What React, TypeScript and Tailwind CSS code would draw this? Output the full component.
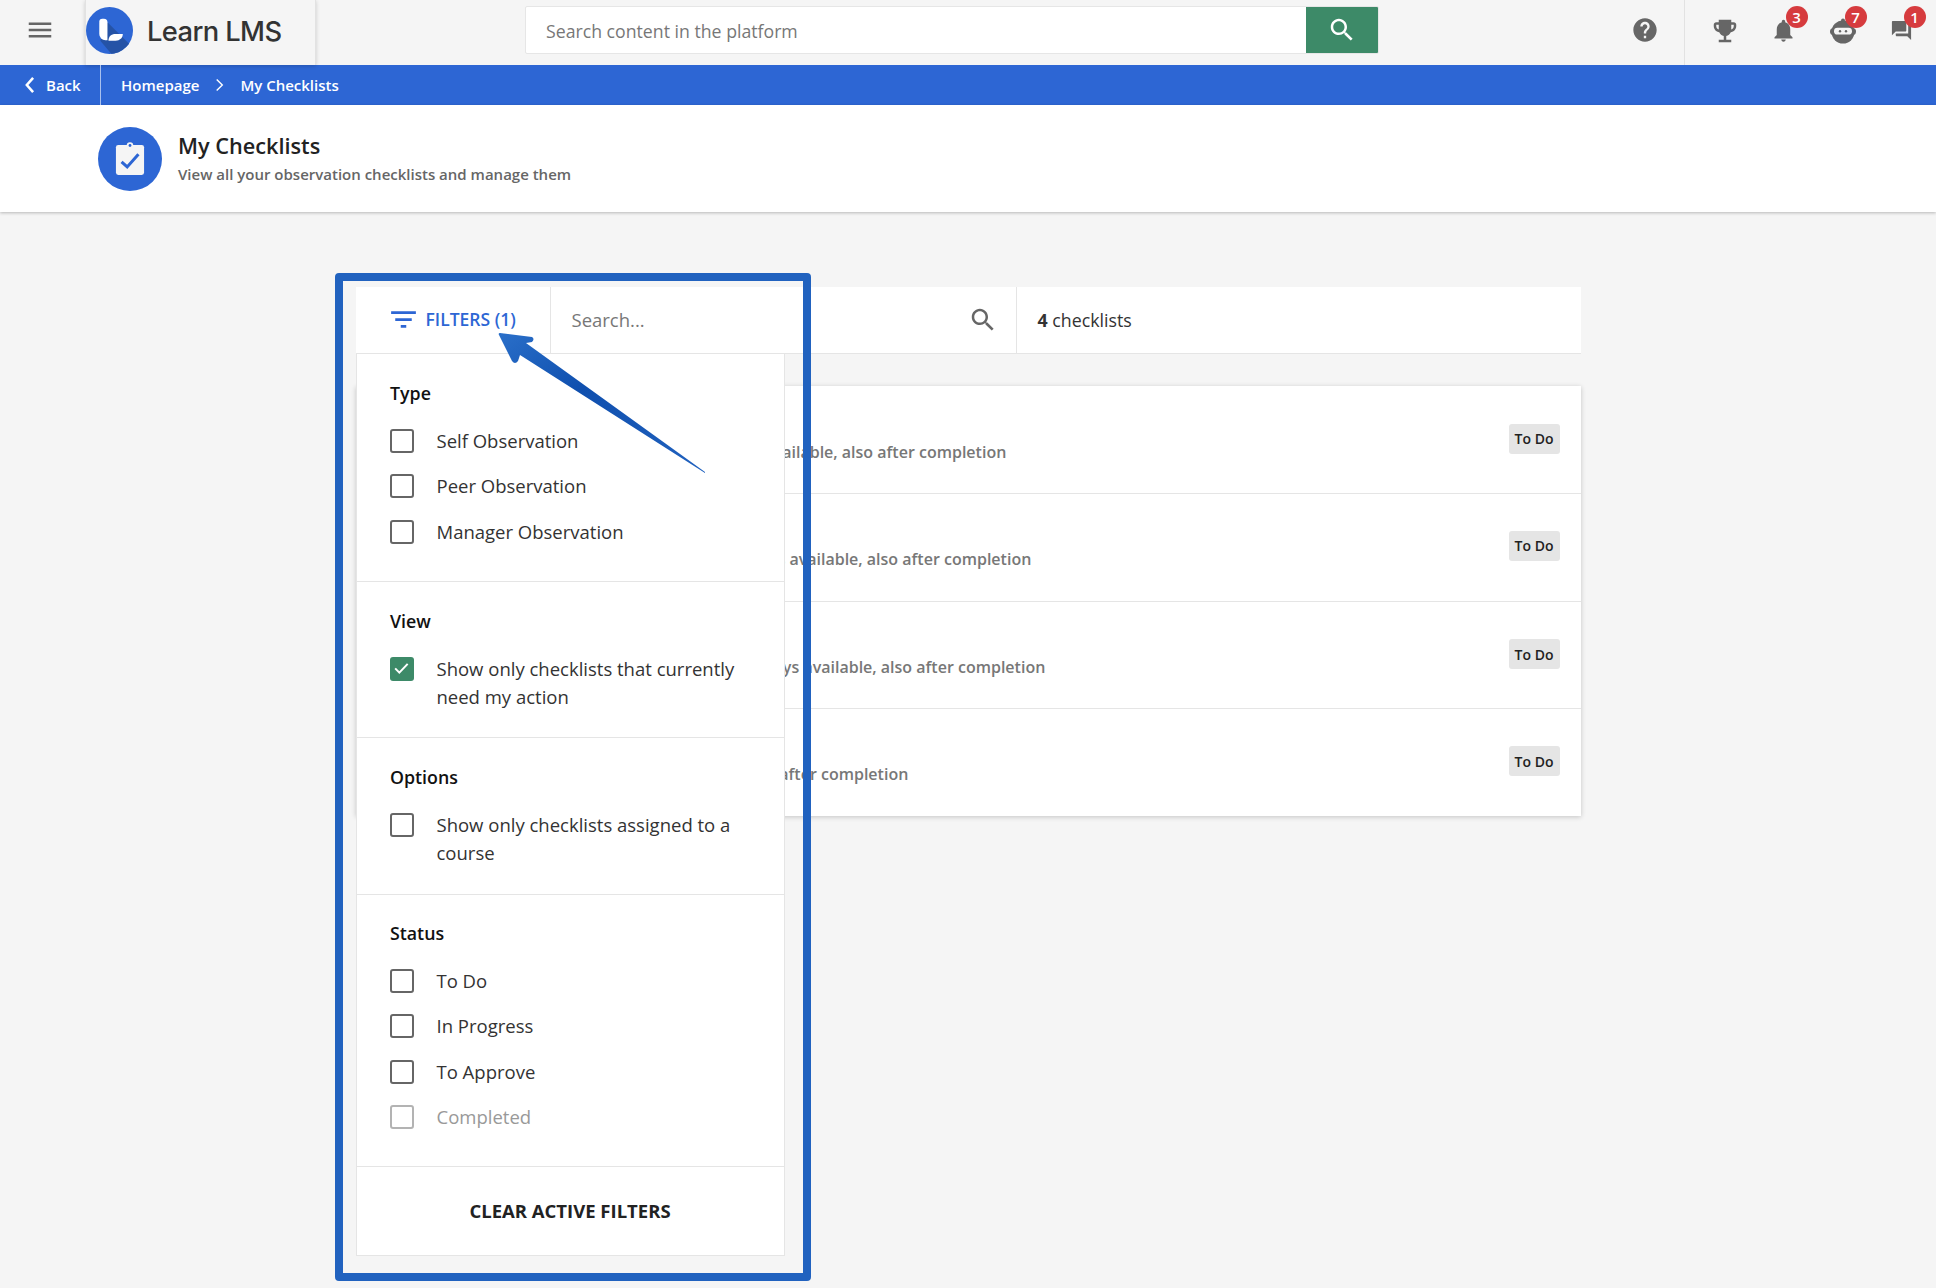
import React from "react";

const P = {
  menu: "M3 18h18v-2H3v2zm0-5h18v-2H3v2zm0-7v2h18V6H3z",
  search: "M15.5 14h-.79l-.28-.27C15.41 12.59 16 11.11 16 9.5 16 5.91 13.09 3 9.5 3S3 5.91 3 9.5 5.91 16 9.5 16c1.61 0 3.09-.59 4.23-1.57l.27.28v.79l5 4.99L20.49 19l-4.99-5zm-6 0C7.01 14 5 11.99 5 9.5S7.01 5 9.5 5 14 7.01 14 9.5 11.99 14 9.5 14z",
  help: "M12 2C6.48 2 2 6.48 2 12s4.48 10 10 10 10-4.48 10-10S17.52 2 12 2zm1 17h-2v-2h2v2zm2.07-7.75l-.9.92C13.45 12.9 13 13.5 13 15h-2v-.5c0-1.1.45-2.1 1.17-2.83l1.24-1.26c.37-.36.59-.86.59-1.41 0-1.1-.9-2-2-2s-2 .9-2 2H8c0-2.21 1.79-4 4-4s4 1.79 4 4c0 .88-.36 1.68-.93 2.25z",
  trophy: "M19 5h-2V3H7v2H5c-1.1 0-2 .9-2 2v1c0 2.55 1.92 4.63 4.39 4.94.63 1.5 1.98 2.63 3.61 2.96V19H7v2h10v-2h-4v-3.1c1.63-.33 2.98-1.46 3.61-2.96C19.08 12.63 21 10.55 21 8V7c0-1.1-.9-2-2-2zM5 8V7h2v3.82C5.84 10.4 5 9.3 5 8zm14 0c0 1.3-.84 2.4-2 2.82V7h2v1z",
  bell: "M12 22c1.1 0 2-.9 2-2h-4c0 1.1.9 2 2 2zm6-6v-5c0-3.07-1.63-5.64-4.5-6.32V4c0-.83-.67-1.5-1.5-1.5s-1.5.67-1.5 1.5v.68C7.64 5.36 6 7.92 6 11v5l-2 2v1h16v-1l-2-2z",
  chat: "M21 6h-2v9H6v2c0 .55.45 1 1 1h11l4 4V7c0-.55-.45-1-1-1zm-4 6V3c0-.55-.45-1-1-1H3c-.55 0-1 .45-1 1v14l4-4h10c.55 0 1-.45 1-1z",
  filter: "M10 18h4v-2h-4v2zM3 6v2h18V6H3zm3 7h12v-2H6v2z",
};

function Icon({ d, className }: { d: string; className: string }) {
  return (
    <svg viewBox="0 0 24 24" className={className} fill="currentColor">
      <path d={d} />
    </svg>
  );
}

function Logo() {
  return (
    <svg viewBox="0 0 46 46" className="h-[47px] w-[47px] shrink-0">
      <defs>
        <clipPath id="logoClip">
          <circle cx="23" cy="23" r="23" />
        </clipPath>
      </defs>
      <circle cx="23" cy="23" r="23" fill="#2d66d4" />
      <g clipPath="url(#logoClip)">
        <path d="M21 15 L50 44 L30 52 L14 33 Z" fill="#2553a6" />
      </g>
      <path d="M13 14.5 a3 3 0 0 1 3-3 h1.5 a3.5 3.5 0 0 1 3.5 3.5 V32.5 H19 A6 6 0 0 1 13 26.5 Z" fill="#fff" />
      <path d="M22 33 C22 29 24.5 26.5 29 26.5 H36 C36 30.5 33 33 29 33 Z" fill="#fff" />
    </svg>
  );
}

function BotIcon({ className }: { className: string }) {
  return (
    <svg viewBox="0 0 26 26" className={className}>
      <circle cx="13" cy="2.6" r="2" fill="#666" />
      <circle cx="13" cy="14" r="11.5" fill="#666" />
      <rect x="0" y="10" width="26" height="7" rx="3.5" fill="#666" />
      <rect x="4" y="9.8" width="18" height="6.8" rx="3.4" fill="#f5f5f5" />
      <circle cx="10" cy="13.2" r="1.2" fill="#666" />
      <circle cx="16" cy="13.2" r="1.2" fill="#666" />
    </svg>
  );
}

function HeaderIcon({ badge, children }: { badge: string; children: React.ReactNode }) {
  return (
    <div className="relative flex h-[65px] w-[59px] items-center justify-center pb-[5px]">
      {children}
      <span className="absolute left-[31px] top-[6px] flex h-[22px] w-[22px] items-center justify-center rounded-full bg-[#d63b3e] text-[15px] font-semibold leading-none text-white">
        {badge}
      </span>
    </div>
  );
}

function Check({ label, checked, disabled }: { label: string; checked?: boolean; disabled?: boolean }) {
  return (
    <div className="flex gap-[23px]">
      {checked ? (
        <span className="mt-[2px] flex h-[24px] w-[24px] shrink-0 items-center justify-center rounded-[3px] bg-[#3d8a68]">
          <svg viewBox="0 0 24 24" className="h-[20px] w-[20px] -translate-x-[1px] -translate-y-[1px]" fill="none" stroke="#fff" strokeWidth="2.4">
            <path d="M5 12.5l5 5L20 7" />
          </svg>
        </span>
      ) : (
        <span
          className={
            disabled
              ? "mt-[2px] h-[24px] w-[24px] shrink-0 rounded-[3px] border-2 border-[#b3b3b3]"
              : "mt-[2px] h-[24px] w-[24px] shrink-0 rounded-[3px] border-2 border-[#666666]"
          }
        />
      )}
      <span className={disabled ? "text-[18.5px] leading-[28px] text-[#999999]" : "text-[18.5px] leading-[28px] text-[#333333]"}>
        {label}
      </span>
    </div>
  );
}

function Heading({ children }: { children: React.ReactNode }) {
  return <div className="-mt-[1px] mb-[21px] ml-[0.5px] text-[17.8px] font-semibold leading-[26px] text-[#111111]">{children}</div>;
}

const rows = [
  { pad: "pl-[351px]", h: "h-[108px] pb-[2px]" },
  { pad: "pl-[376px]", h: "h-[108px] pb-[4px]" },
  { pad: "pl-[390px]", h: "h-[107px] pb-[2px]" },
  { pad: "pl-[253px]", h: "h-[107px] pb-[3px]" },
];

export default function App() {
  return (
    <div className="relative h-[1288px] w-full overflow-hidden bg-[#f5f5f5] font-['Open_Sans',sans-serif] text-[#333333]">
      {/* top bar */}
      <header className="flex h-[65px] items-stretch bg-[#f5f5f5]">
        <div className="flex w-[85px] items-center justify-center pb-[5px] pr-[6px] text-[#666666]">
          <Icon d={P.menu} className="h-[30px] w-[30px]" />
        </div>
        <div className="flex w-[231px] items-center gap-[14px] border-x border-[#e2e2e2] shadow-[0_1px_4px_rgba(0,0,0,0.18)]">
          <div className="pb-[4px]">
            <Logo />
          </div>
          <span className="font-['Inter',sans-serif] text-[27.3px] font-medium tracking-[-0.6px] text-[#333333]">Learn LMS</span>
        </div>
        <div className="ml-[209px] mt-[6px] flex h-[48px] w-[854px] overflow-hidden rounded-[2px] border border-[#e6e6e6] bg-white">
          <div className="flex flex-1 items-center pl-[20px] pt-[2px] text-[17.7px] text-[#777777]">Search content in the platform</div>
          <div className="flex w-[72px] items-center justify-center bg-[#3d8a68] text-white">
            <Icon d={P.search} className="h-[30px] w-[30px]" />
          </div>
        </div>
        <div className="ml-auto flex items-stretch pr-[4.5px] text-[#666666]">
          <div className="mr-[11px] flex w-[79px] items-center border-r border-[#e2e2e2] pb-[5px] pl-[25px]">
            <Icon d={P.help} className="h-[28px] w-[28px]" />
          </div>
          <div className="flex h-[65px] w-[59px] items-center justify-center pb-[4px]">
            <Icon d={P.trophy} className="h-[30px] w-[30px]" />
          </div>
          <HeaderIcon badge="3">
            <Icon d={P.bell} className="h-[27px] w-[27px] -translate-x-[1px]" />
          </HeaderIcon>
          <HeaderIcon badge="7">
            <BotIcon className="mt-[2px] h-[26px] w-[26px]" />
          </HeaderIcon>
          <HeaderIcon badge="1">
            <Icon d={P.chat} className="h-[23px] w-[23px] -translate-x-[1px]" />
          </HeaderIcon>
        </div>
      </header>

      {/* breadcrumb */}
      <nav className="flex h-[40px] items-center bg-[#2d66d4] text-[15px] font-semibold text-white">
        <div className="flex h-full w-[101px] items-center border-r border-[#a9c1ee] pl-[24px]">
          <svg viewBox="0 0 12 20" className="h-[18px] w-[11px]" fill="none" stroke="#fff" strokeWidth="2.8">
            <path d="M10 2 L3 10 L10 18" />
          </svg>
          <span className="ml-[11px]">Back</span>
        </div>
        <span className="ml-[20px]">Homepage</span>
        <svg viewBox="0 0 12 20" className="ml-[16px] h-[14px] w-[9px]" fill="none" stroke="#fff" strokeWidth="2">
          <path d="M2 2 L10 10 L2 18" />
        </svg>
        <span className="ml-[16px]">My Checklists</span>
      </nav>

      {/* page heading */}
      <section className="flex h-[107px] items-center bg-white pl-[98px] shadow-[0_1px_3px_rgba(0,0,0,0.25)]">
        <div className="flex h-[64px] w-[64px] shrink-0 items-center justify-center rounded-full bg-[#2d66d4]">
          <svg viewBox="0 0 32 36" className="h-[34px] w-[30px]">
            <rect x="1" y="3" width="30" height="32" rx="2.5" fill="#f5f5f5" />
            <circle cx="16" cy="3.5" r="3.5" fill="#f5f5f5" />
            <circle cx="16" cy="3.6" r="1.5" fill="#2d66d4" />
            <path d="M7 21l6 5.5L25 13" fill="none" stroke="#2d66d4" strokeWidth="3.2" />
          </svg>
        </div>
        <div className="ml-[16px] pb-[2px]">
          <h1 className="mb-[2px] text-[21.7px] font-semibold leading-[30px] text-[#222222]">My Checklists</h1>
          <p className="text-[15px] font-semibold leading-[22px] text-[#666666]">View all your observation checklists and manage them</p>
        </div>
      </section>

      {/* content */}
      <main className="relative mx-auto mt-[75px] w-[1225px]">
        <div className="flex h-[67px] border-b border-[#e5e5e5] bg-white">
          <div className="flex w-[195px] items-center border-r border-[#e5e5e5] pb-[2px] pl-[31px] text-[#2d66d4]">
            <Icon d={P.filter} className="h-[33px] w-[33px]" />
            <span className="ml-[6px] text-[17.5px] font-semibold">FILTERS (1)</span>
          </div>
          <div className="flex w-[466px] items-center justify-between border-r border-[#e5e5e5] pl-[21px] pr-[18px]">
            <span className="text-[18.5px] text-[#777777]">Search...</span>
            <Icon d={P.search} className="h-[30px] w-[30px] text-[#666666]" />
          </div>
          <div className="flex flex-1 items-center pl-[21px] text-[17.8px] text-[#333333]">
            <span>
              <b className="font-bold">4</b> checklists
            </span>
          </div>
        </div>

        <div className="mt-[32px] bg-white shadow-[0_1px_5px_rgba(0,0,0,0.2)]">
          {rows.map((r, i) => (
            <div key={i} className={`${r.h} flex items-center justify-between border-b border-[#e5e5e5] pr-[21px] last:border-b-0`}>
              <div className={`${r.pad} pt-[26px] text-[16px] font-semibold text-[#777777]`}>Always available, also after completion</div>
              <span className="flex h-[30px] w-[51px] items-center justify-center rounded-[3px] bg-[#e5e5e5] text-[14px] font-semibold text-[#222222]">To Do</span>
            </div>
          ))}
        </div>

        {/* filters dropdown */}
        <aside className="absolute left-0 top-[67px] w-[429px] border border-t-0 border-[#e5e5e5] bg-white">
          <div className="border-b border-[#e5e5e5] px-[33px] pb-[35.5px] pt-[27px]">
            <Heading>Type</Heading>
            <div className="flex flex-col gap-[17.25px]">
              <Check label="Self Observation" />
              <Check label="Peer Observation" />
              <Check label="Manager Observation" />
            </div>
          </div>
          <div className="border-b border-[#e5e5e5] px-[33px] pb-[26px] pt-[27px]">
            <Heading>View</Heading>
            <Check label="Show only checklists that currently need my action" checked />
          </div>
          <div className="border-b border-[#e5e5e5] px-[33px] pb-[27px] pt-[27px]">
            <Heading>Options</Heading>
            <Check label="Show only checklists assigned to a course" />
          </div>
          <div className="border-b border-[#e5e5e5] px-[33px] pb-[35px] pt-[26px]">
            <Heading>Status</Heading>
            <div className="flex flex-col gap-[17.25px]">
              <Check label="To Do" />
              <Check label="In Progress" />
              <Check label="To Approve" />
              <Check label="Completed" disabled />
            </div>
          </div>
          <div className="flex h-[88px] items-center justify-center text-[18.5px] font-bold text-[#222222]">CLEAR ACTIVE FILTERS</div>
        </aside>

        {/* annotation frame */}
        <div className="pointer-events-none absolute left-[-21px] top-[-14px] h-[1008px] w-[476px] rounded-[4px] border-[8px] border-[#2162bf]" />

        {/* annotation arrow */}
        <svg viewBox="0 0 220 150" className="pointer-events-none absolute left-[137px] top-[42px] h-[150px] w-[220px]">
          <defs>
            <linearGradient id="arrowFill" x1="0" y1="0" x2="1" y2="1">
              <stop offset="0" stopColor="#2a6fc9" />
              <stop offset="0.4" stopColor="#0f4fae" />
              <stop offset="1" stopColor="#2162bf" />
            </linearGradient>
          </defs>
          <path
            d="M212 143 L33 14 L39 13 Q42 10 39 8 L7 4 Q5 4 6 6 L19 32 Q22 36 25 32 L27 26 L212 144 Z"
            fill="url(#arrowFill)"
          />
        </svg>
      </main>
    </div>
  );
}
